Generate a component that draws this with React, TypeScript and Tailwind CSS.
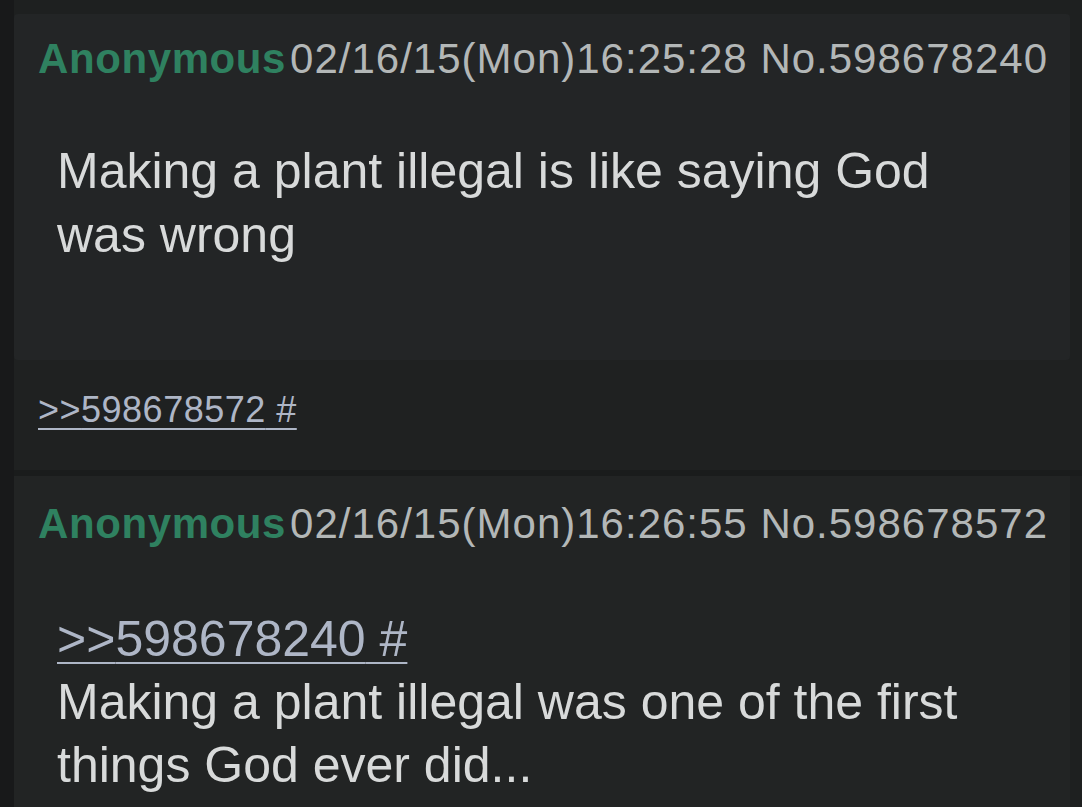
const font = "font-['Liberation_Sans',Arial,sans-serif]";

type PostHeaderProps = { date: string; no: string };

function PostHeader({ date, no }: PostHeaderProps) {
  return (
    <div className="flex items-baseline h-[48px] leading-[48px] text-[42px] tracking-[1px] whitespace-nowrap">
      <span className="font-bold text-[#2f8160] tracking-[0.6px]">Anonymous</span>
      <span className="ml-[4px] text-[#b3b7b7]">
        {date} No.{no}
      </span>
    </div>
  );
}

function QuoteLink({ id, className }: { id: string; className: string }) {
  return (
    <a
      href="#"
      className={`text-[#aeb6c6] underline decoration-[#aeb6c6] decoration-[2px] underline-offset-[6px] ${className}`}
    >
      &gt;&gt;{id} #
    </a>
  );
}

export default function App() {
  return (
    <div className={`w-[1082px] h-[807px] overflow-hidden flex bg-[#1e2020] ${font}`}>
      <div className="w-[14px] shrink-0 bg-[#18191a]" />
      <div className="flex-1 flex flex-col">
        {/* post 1 */}
        <div className="mt-[14px] mr-[12px] bg-[#232526] rounded-sm pt-[21px] pl-[24px] h-[346px]">
          <PostHeader date="02/16/15(Mon)16:25:28" no="598678240" />
          <p className="mt-[56px] ml-[19px] max-w-[940px] text-[50px] leading-[64px] text-[#d8dada]">
            Making a plant illegal is like saying God was wrong
          </p>
        </div>
        <div className="h-[110px] pt-[30px] pl-[24px] bg-[#1f2121]">
          <div className="leading-[40px]">
            <QuoteLink id="598678572" className="text-[36px] tracking-[0.5px]" />
          </div>
        </div>
        <div className="h-[6px] bg-[#1a1c1c]" />
        {/* post 2 */}
        <div className="flex-1 mr-[12px] bg-[#222424] pt-[24px] pl-[24px]">
          <PostHeader date="02/16/15(Mon)16:26:55" no="598678572" />
          <div className="mt-[60px] ml-[19px] max-w-[940px] text-[50px] leading-[63px] text-[#d8dada]">
            <div>
              <QuoteLink id="598678240" className="" />
            </div>
            <p>Making a plant illegal was one of the first things God ever did...</p>
          </div>
        </div>
      </div>
    </div>
  );
}
